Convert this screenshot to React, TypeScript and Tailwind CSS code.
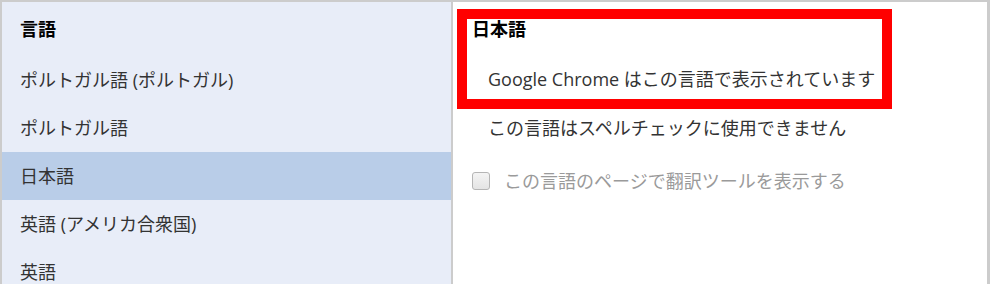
const font = { fontFamily: '"Open Sans", "Noto Sans CJK JP", sans-serif' };

const items = [
  { label: "ポルトガル語 (ポルトガル)", selected: false },
  { label: "ポルトガル語", selected: false },
  { label: "日本語", selected: true },
  { label: "英語 (アメリカ合衆国)", selected: false },
  { label: "英語", selected: false },
];

function App() {
  return (
    <div
      className="w-[995px] h-[284px] overflow-hidden bg-white text-[18px] text-[#333]"
      style={font}
    >
      <div className="flex w-[990px] h-full border-t-2 border-l-2 border-r-[3px] border-[#cccccc]">
        {/* language list */}
        <div className="w-[451px] shrink-0 bg-[#e8edf8] border-r-2 border-[#cccccc]">
          <div className="h-[54px] flex items-center pl-[18px] font-bold text-black">
            言語
          </div>
          {items.map((it) => (
            <div
              key={it.label}
              className={
                "h-[48px] flex items-center pl-[18px] " +
                (it.selected ? "bg-[#b9cde8]" : "")
              }
            >
              {it.label}
            </div>
          ))}
        </div>

        {/* details */}
        <div className="flex-1 bg-white pt-[7px] pl-[4px]">
          <div className="w-[435px] h-[100px] border-[10px] border-[#ff0000] pl-[5px]">
            <div className="leading-[20px] font-bold text-black">日本語</div>
            <div className="leading-[20px] mt-[30px] pl-[16px]">
              Google Chrome はこの言語で表示されています
            </div>
          </div>
          <div className="leading-[20px] mt-[9px] pl-[31px]">
            この言語はスペルチェックに使用できません
          </div>
          <div className="flex items-center mt-[33px] pl-[15px] h-[20px] gap-[14px]">
            <span className="w-[18px] h-[18px] rounded-[3px] border border-[#b5b5b5] bg-gradient-to-b from-[#f4f4f4] to-[#e4e4e4]" />
            <span className="leading-[20px] text-[#9a9a9a]">
              この言語のページで翻訳ツールを表示する
            </span>
          </div>
        </div>
      </div>
    </div>
  );
}

export default App;
